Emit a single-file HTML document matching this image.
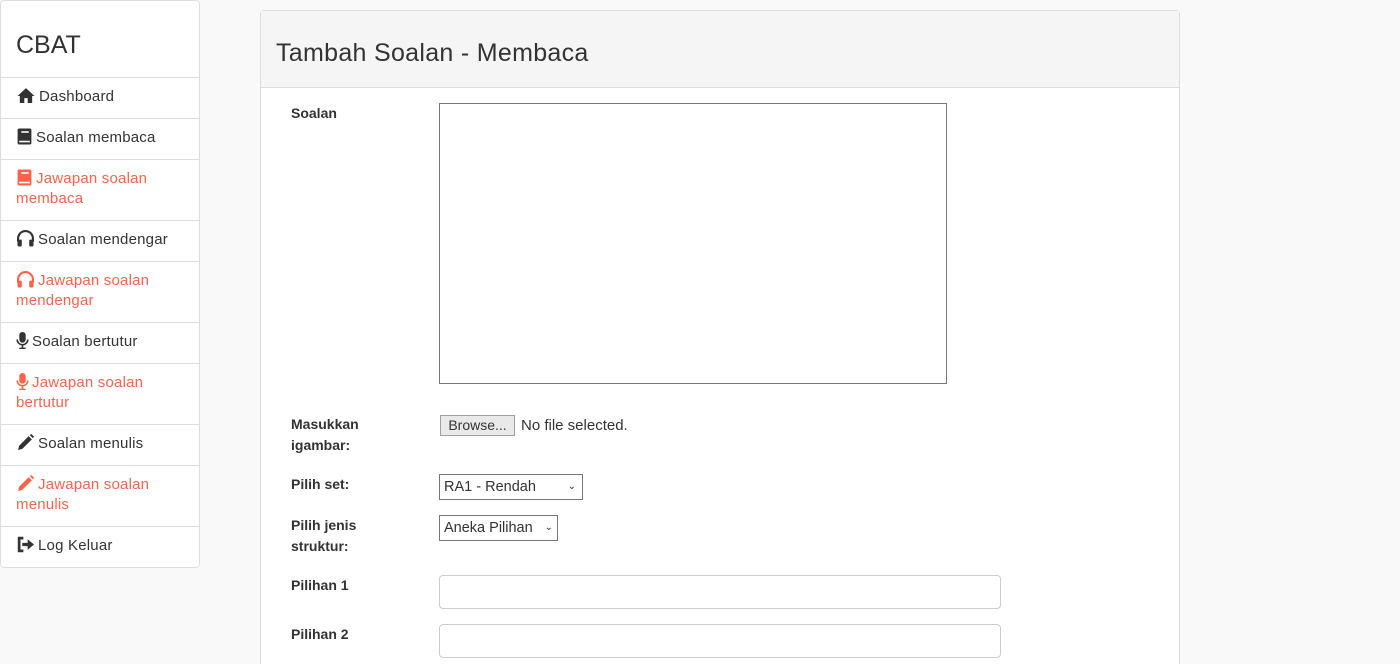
<!DOCTYPE html>
<html style="overflow:hidden;height:664px"><head><style>
body{margin:0;background:#f9f9f9;font-family:"Liberation Sans",sans-serif;color:#333;width:1400px;height:664px;overflow:hidden;position:relative}
.sb{position:absolute;left:0;top:0;width:198px;height:566px;background:#fff;border:1px solid #ddd;border-radius:4px}
.sb h1{position:absolute;left:15px;top:30px;margin:0;font-size:25px;font-weight:normal;color:#333}
.it{position:absolute;left:0;width:198px;border-top:1px solid #ddd;font-size:15px;line-height:20px;box-sizing:border-box;padding:9px 15px;letter-spacing:0.2px}
.r{color:#f9634b}
.ic{display:inline-block;width:17px;height:17px;vertical-align:-3px;margin-right:3px}
.pn{position:absolute;left:260px;top:10px;width:918px;height:660px;background:#fff;border:1px solid #ddd;border-radius:4px}
.hd{height:76px;background:#f5f5f5;border-bottom:1px solid #ddd}
.hd h2{margin:0;position:absolute;left:15px;top:28px;font-size:25px;font-weight:normal;color:#333;letter-spacing:0.3px}
.lb{position:absolute;left:291px;font-weight:bold;font-size:14px;line-height:21px;color:#333}
.bx{position:absolute;background:#fff;box-sizing:border-box}
</style></head><body>
<div class="sb"><h1>CBAT</h1>
<div class="it" style="top:76px"><svg class="ic" viewBox="0 0 16 16" style="width:20px"><path d="M8 1L0 8.5h2.2V15h4.2v-4.5h3.2V15h4.2V8.5H16z" fill="#333"/></svg>Dashboard</div>
<div class="it" style="top:117px"><svg class="ic" viewBox="0 0 16 16"><rect x="1.5" y="0.5" width="13" height="15" rx="1.5" fill="#333"/><rect x="5" y="3" width="7" height="1.5" fill="#fff"/><rect x="3" y="12" width="10" height="1.5" fill="#fff"/></svg>Soalan membaca</div>
<div class="it r" style="top:158px"><svg class="ic" viewBox="0 0 16 16"><rect x="1.5" y="0.5" width="13" height="15" rx="1.5" fill="#f9634b"/><rect x="5" y="3" width="7" height="1.5" fill="#fff"/><rect x="3" y="12" width="10" height="1.5" fill="#fff"/></svg>Jawapan soalan<br>membaca</div>
<div class="it" style="top:219px"><svg class="ic" viewBox="0 0 16 16" style="width:19px"><path d="M1 11V8a7 7 0 0 1 14 0v3" stroke="#333" stroke-width="2" fill="none"/><rect x="0.5" y="9" width="4" height="6.5" rx="1" fill="#333"/><rect x="11.5" y="9" width="4" height="6.5" rx="1" fill="#333"/></svg>Soalan mendengar</div>
<div class="it r" style="top:260px"><svg class="ic" viewBox="0 0 16 16" style="width:19px"><path d="M1 11V8a7 7 0 0 1 14 0v3" stroke="#f9634b" stroke-width="2" fill="none"/><rect x="0.5" y="9" width="4" height="6.5" rx="1" fill="#f9634b"/><rect x="11.5" y="9" width="4" height="6.5" rx="1" fill="#f9634b"/></svg>Jawapan soalan<br>mendengar</div>
<div class="it" style="top:321px"><svg class="ic" viewBox="0 0 12 16" style="width:13px"><rect x="3" y="0" width="6" height="10" rx="3" fill="#333"/><path d="M1 7a5 5 0 0 0 10 0M6 12v3M3 15.5h6" stroke="#333" stroke-width="1.5" fill="none"/></svg>Soalan bertutur</div>
<div class="it r" style="top:362px"><svg class="ic" viewBox="0 0 12 16" style="width:13px"><rect x="3" y="0" width="6" height="10" rx="3" fill="#f9634b"/><path d="M1 7a5 5 0 0 0 10 0M6 12v3M3 15.5h6" stroke="#f9634b" stroke-width="1.5" fill="none"/></svg>Jawapan soalan<br>bertutur</div>
<div class="it" style="top:423px"><svg class="ic" viewBox="0 0 16 16" style="width:19px"><path d="M1 15l1-4 9-9 3 3-9 9z M12 1l1.5-1 2.5 2.5-1 1.5z" fill="#333"/></svg>Soalan menulis</div>
<div class="it r" style="top:464px"><svg class="ic" viewBox="0 0 16 16" style="width:19px"><path d="M1 15l1-4 9-9 3 3-9 9z M12 1l1.5-1 2.5 2.5-1 1.5z" fill="#f9634b"/></svg>Jawapan soalan<br>menulis</div>
<div class="it" style="top:525px"><svg class="ic" viewBox="0 0 16 16" style="width:19px"><path d="M6 2H2v12h4" stroke="#333" stroke-width="2.5" fill="none"/><path d="M5 6.5h5V3l6 5-6 5V9.5H5z" fill="#333"/></svg>Log Keluar</div>
</div>
<div class="pn"><div class="hd"><h2>Tambah Soalan - Membaca</h2></div></div>
<div class="lb" style="top:103px">Soalan</div>
<div class="bx" style="left:439px;top:103px;width:508px;height:281px;border:1px solid #767676"></div>
<div class="lb" style="top:414px">Masukkan<br>igambar:</div>
<div class="bx" style="left:440px;top:415px;width:75px;height:21px;background:#e9e9e9;border:1px solid #a0a0a0;font-size:14px;text-align:center;line-height:19px">Browse...</div>
<div style="position:absolute;left:521px;top:417px;font-size:15px">No file selected.</div>
<div class="lb" style="top:474px">Pilih set:</div>
<div class="bx" style="left:439px;top:474px;width:144px;height:26px;border:1px solid #767676;font-size:14.5px;line-height:24px;padding-left:4px">RA1 - Rendah<span style="position:absolute;right:6px;font-size:10px">&#8964;</span></div>
<div class="lb" style="top:515px">Pilih jenis<br>struktur:</div>
<div class="bx" style="left:439px;top:515px;width:119px;height:26px;border:1px solid #767676;font-size:14.5px;line-height:24px;padding-left:4px">Aneka Pilihan<span style="position:absolute;right:4px;font-size:10px">&#8964;</span></div>
<div class="lb" style="top:575px">Pilihan 1</div>
<div class="bx" style="left:439px;top:575px;width:562px;height:34px;border:1px solid #ccc;border-radius:4px"></div>
<div class="lb" style="top:624px">Pilihan 2</div>
<div class="bx" style="left:439px;top:624px;width:562px;height:34px;border:1px solid #ccc;border-radius:4px"></div>
</body></html>
